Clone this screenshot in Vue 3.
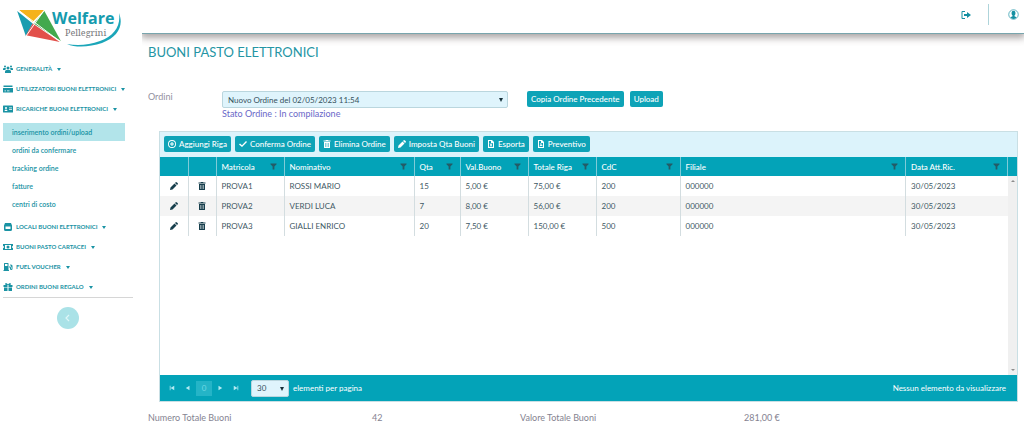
<script setup>
import { ref } from 'vue'

const icons = {
  users: { box: '0 0 20 16', d: 'M4 1a2 2 0 1 1 0 4 2 2 0 0 1 0-4zM16 1a2 2 0 1 1 0 4 2 2 0 0 1 0-4zM10 3a3 3 0 1 1 0 6 3 3 0 0 1 0-6zM0 10V8q0-2 2-2h3l1 2-2 2zM20 10V8q0-2-2-2h-3l-1 2 2 2zM4 16v-3q0-3 3-3h6q3 0 3 3v3z' },
  card: { box: '0 0 20 16', d: 'M1 1h18v3H1zM0 6h20v9H0zM3 11v1.500h3V11zM8 11v1.500h5V11z' },
  idcard: { box: '0 0 20 16', d: 'M1 1h18q1 0 1 1v12q0 1-1 1H1q-1 0-1-1V2q0-1 1-1zM6 4a2 2 0 1 0 0 4 2 2 0 0 0 0-4zM3 12h6q0-3-3-3t-3 3zM12 5v1.500h6V5zM12 8v1.500h6V8z' },
  store: { box: '0 0 20 16', d: 'M4 0h12l2 5v8q0 3-3 3H5q-3 0-3-3V5zM5 7v4q0 1 1 1h8q1 0 1-1V7z' },
  ticket: { box: '0 0 20 16', d: 'M0 2h20v4a2 2 0 0 0 0 4v4H0v-4a2 2 0 0 0 0-4zM4 4v8h12V4zM10 5a3 3 0 1 1 0 6 3 3 0 0 1 0-6z' },
  fuel: { box: '0 0 20 16', d: 'M2 1q0-1 1-1h7q1 0 1 1v13h1v2H1v-2h1zM4 2v4h5V2zM12 7h2q2 0 2 3v2h1V8l-2-2V2l4 3v7q0 2-2.500 2T14 12v-3h-2z' },
  gift: { box: '0 0 20 16', d: 'M1 4h4Q3 0 6 0q2 0 4 3 2-3 4-3 3 0 1 4h4v4h-8V4H9v4H1zM2 9h7v7H2zM11 9h7v7h-7z' },
  plus: { box: '0 0 16 16', d: 'M8 0a8 8 0 1 1 0 16A8 8 0 0 1 8 0zM8 1.800a6.200 6.200 0 1 0 0 12.400A6.200 6.200 0 0 0 8 1.800zM7 4h2v3h3v2H9v3H7V9H4V7h3z' },
  check: { box: '0 0 16 16', d: 'M0 9l2-2 4 3.500L14 2l2 2L6 14z' },
  trash: { box: '0 0 16 16', d: 'M6 0h4l1 1h4v2H1V1h4zM2 4h12v11q0 1-1 1H3q-1 0-1-1zM4.500 6v8h1V6zM7.500 6v8h1V6zM10.500 6v8h1V6z' },
  pencil: { box: '0 0 16 16', d: 'M0 16l1-5 8-8 4 4-8 8zM10 2l2-2q1 0 2 1l1 1q1 1 1 2l-2 2z' },
  sheet: { box: '0 0 16 16', d: 'M2 0h8l4 4v12H2zM4 2v12h8V6H8V2zM5 7h2l1 1.500L9 7h2l-2 3 2 3H9l-1-1.500L7 13H5l2-3z' },
  pdf: { box: '0 0 16 16', d: 'M2 0h8l4 4v12H2zM4 2v12h8V6H8V2zM7 6h1.500v2.500L11 11v1.500L8 11.500 5.500 13 5 12l2-3z' },
  funnel: { box: '0 0 16 16', d: 'M1 1h14v2l-5 5v7H6V8L1 3z' },
  exit: { box: '0 0 20 16', d: 'M8 0v2H3v12h5v2H3q-2 0-2-2V2q0-2 2-2zM6 6h6V2l8 6-8 6v-4H6z' },
}

const before = [
  { label: 'GENERALITÀ', icon: 'users' },
  { label: 'UTILIZZATORI BUONI ELETTRONICI', icon: 'card' },
  { label: 'RICARICHE BUONI ELETTRONICI', icon: 'idcard' },
]
const submenu = ['inserimento ordini/upload', 'ordini da confermare', 'tracking ordine', 'fatture', 'centri di costo']
const after = [
  { label: 'LOCALI BUONI ELETTRONICI', icon: 'store' },
  { label: 'BUONI PASTO CARTACEI', icon: 'ticket' },
  { label: 'FUEL VOUCHER', icon: 'fuel' },
  { label: 'ORDINI BUONI REGALO', icon: 'gift' },
]
const tools = [
  { label: 'Aggiungi Riga', icon: 'plus' },
  { label: 'Conferma Ordine', icon: 'check' },
  { label: 'Elimina Ordine', icon: 'trash' },
  { label: 'Imposta Qta Buoni', icon: 'pencil' },
  { label: 'Esporta', icon: 'sheet' },
  { label: 'Preventivo', icon: 'pdf' },
]
const columns = ['Matricola', 'Nominativo', 'Qta', 'Val.Buono', 'Totale Riga', 'CdC', 'Filiale', 'Data Att.Ric.']
const rows = [
  ['PROVA1', 'ROSSI MARIO', '15', '5,00 €', '75,00 €', '200', '000000', '30/05/2023'],
  ['PROVA2', 'VERDI LUCA', '7', '8,00 €', '56,00 €', '200', '000000', '30/05/2023'],
  ['PROVA3', 'GIALLI ENRICO', '20', '7,50 €', '150,00 €', '500', '000000', '30/05/2023'],
]
const order = ref('Nuovo Ordine del 02/05/2023 11:54')
const pageSize = ref('30')
</script>

<template>
  <div class="page">
    <aside class="sidebar">
      <a href="#" class="logo" aria-label="Welfare Pellegrini">
        <svg class="kite" viewBox="0 0 46 36" aria-hidden="true">
          <path d="M0 1L16 14 9 27z" fill="#1a9db0" />
          <path d="M2 0L28 0 16 12z" fill="#f5b21b" />
          <path d="M28 1L45 32 17 14z" fill="#43a94d" />
          <path d="M16 14L44 33 9 26z" fill="#e2504b" />
          <path d="M1 0L45 33M28 0L9 27" stroke="#fff" stroke-width="1" />
        </svg>
        <span class="brand"><b>Welfare</b><span>Pellegrini</span></span>
        <svg class="swoosh" viewBox="0 0 56 36" aria-hidden="true">
          <path d="M55 0C60 13 54 24 38 30 26 34 12 35 3 31 14 33 25 32 36 28 50 23 57 13 55 0z" fill="#1ba6b9" />
        </svg>
      </a>
      <nav>
        <button v-for="m in before" :key="m.label" class="menu">
          <svg class="menu-icon" :viewBox="icons[m.icon].box"><path :d="icons[m.icon].d" fill-rule="evenodd" /></svg>
          {{ m.label }}<i class="caret"></i>
        </button>
        <div class="submenu">
          <a v-for="(s, i) in submenu" :key="s" href="#" :class="{ active: i === 0 }">{{ s }}</a>
        </div>
        <button v-for="m in after" :key="m.label" class="menu">
          <svg class="menu-icon" :viewBox="icons[m.icon].box"><path :d="icons[m.icon].d" fill-rule="evenodd" /></svg>
          {{ m.label }}<i class="caret"></i>
        </button>
      </nav>
      <hr />
      <button class="collapse" aria-label="Comprimi menu">
        <svg viewBox="0 0 8 8"><path d="M5 1L2 4l3 3" fill="none" stroke="#dff6f8" stroke-width="1.200" /></svg>
      </button>
    </aside>

    <div class="main">
      <header class="topbar">
        <button class="plain" aria-label="Esci">
          <svg class="exit" :viewBox="icons.exit.box"><path :d="icons.exit.d" /></svg>
        </button>
        <span class="divider"></span>
        <button class="plain" aria-label="Profilo">
          <svg class="profile" viewBox="0 0 22 22">
            <circle cx="11" cy="11" r="9.500" fill="#fff" stroke="#2a9aab" stroke-width="1.500" />
            <path d="M11 3.500q4 0 4 4.500 0 3-2 5v1.500l4 2Q15 20 11 20t-6-3.500l4-2V13Q7 11 7 8q0-4.500 4-4.500z" fill="#1590a2" />
          </svg>
        </button>
      </header>

      <main class="content">
        <h1>BUONI PASTO ELETTRONICI</h1>

        <div class="order">
          <label for="order">Ordini</label>
          <div class="order-field">
            <div class="select">
              <select id="order" v-model="order"><option>Nuovo Ordine del 02/05/2023 11:54</option></select>
              <i class="arrow"></i>
            </div>
            <p>Stato Ordine : In compilazione</p>
          </div>
          <div class="order-actions">
            <button class="btn">Copia Ordine Precedente</button>
            <button class="btn">Upload</button>
          </div>
        </div>

        <section class="grid">
          <div class="toolbar">
            <button v-for="t in tools" :key="t.label" class="btn">
              <svg :viewBox="icons[t.icon].box"><path :d="icons[t.icon].d" fill-rule="evenodd" /></svg>{{ t.label }}
            </button>
          </div>
          <div class="body">
            <div class="table-wrap">
              <table>
                <colgroup>
                  <col class="w-icon" /><col class="w-icon" /><col class="w-mat" /><col class="w-name" /><col class="w-qty" />
                  <col class="w-val" /><col class="w-val" /><col class="w-cdc" /><col /><col class="w-date" />
                </colgroup>
                <thead>
                  <tr>
                    <th></th><th></th>
                    <th v-for="c in columns" :key="c">
                      <div class="th">{{ c }}<svg :viewBox="icons.funnel.box"><path :d="icons.funnel.d" /></svg></div>
                    </th>
                  </tr>
                </thead>
                <tbody>
                  <tr v-for="r in rows" :key="r[0]">
                    <td class="act"><button class="plain" aria-label="Modifica"><svg :viewBox="icons.pencil.box"><path :d="icons.pencil.d" /></svg></button></td>
                    <td class="act"><button class="plain" aria-label="Elimina"><svg :viewBox="icons.trash.box"><path :d="icons.trash.d" fill-rule="evenodd" /></svg></button></td>
                    <td v-for="(c, i) in r" :key="i">{{ c }}</td>
                  </tr>
                </tbody>
              </table>
            </div>
            <div class="scroll">
              <div class="scroll-head"></div>
              <div class="track"><i class="up"></i><i class="down"></i></div>
            </div>
          </div>
          <footer class="pager">
            <button aria-label="Prima pagina"><svg viewBox="0 0 8 8"><path d="M1 1h1v6H1zM7 1v6L2 4z" /></svg></button>
            <button aria-label="Pagina precedente"><svg viewBox="0 0 8 8"><path d="M6 1v6L1 4z" /></svg></button>
            <button class="current">0</button>
            <button aria-label="Pagina successiva"><svg viewBox="0 0 8 8"><path d="M2 1v6l5-3z" /></svg></button>
            <button aria-label="Ultima pagina"><svg viewBox="0 0 8 8"><path d="M6 1h1v6H6zM1 1v6l5-3z" /></svg></button>
            <div class="select size">
              <select id="size" v-model="pageSize"><option>30</option></select>
              <i class="arrow"></i>
            </div>
            <label for="size">elementi per pagina</label>
            <span class="info">Nessun elemento da visualizzare</span>
          </footer>
        </section>

        <div class="totals">
          <span>Numero Totale Buoni</span><span>42</span>
          <span>Valore Totale Buoni</span><span>281,00 €</span>
        </div>
      </main>
    </div>
  </div>
</template>

<style>
body { background: #fff; }
</style>

<style scoped>
* { box-sizing: border-box; }
.page {
  display: flex;
  min-height: 100vh;
  font-family: Lato, "Open Sans", sans-serif;
  font-size: 8px;
  line-height: 12px;
  color: #3f5965;
}
button, select { font: inherit; }
button { border: 0; padding: 0; background: none; cursor: pointer; }
a { text-decoration: none; }
svg { display: block; flex: none; fill: currentColor; }

.sidebar { flex: none; width: 142px; padding: 0 9px 0 3px; color: #1a93a4; }
.logo { position: relative; display: flex; height: 59px; padding: 10px 0 0 14px; }
.kite { width: 45px; height: 35px; }
.brand { position: absolute; left: 49px; top: 10px; color: #159bae; font-family: "Open Sans", sans-serif; }
.brand b { display: block; font-size: 16px; line-height: 16px; }
.brand span { display: block; padding-left: 13px; font-family: "Noto Serif", "Liberation Serif", serif; font-size: 9px; line-height: 13px; color: #77777b; }
.swoosh { position: absolute; left: 60px; top: 13px; width: 58px; height: 36px; }

.menu { display: flex; align-items: center; width: 100%; height: 20px; font-size: 6px; font-weight: 700; color: #1a93a4; white-space: nowrap; }
.menu-icon { width: 10px; height: 8px; margin-right: 3px; }
.caret { margin-left: 5px; border: 2px solid transparent; border-top: 3px solid #1a93a4; border-bottom: 0; }
.submenu { display: flex; flex-direction: column; margin: 4px 8px 4px 0; }
.submenu a { height: 18px; padding-left: 9px; font-size: 7px; font-weight: 600; line-height: 18px; color: #1a93a4; }
.submenu .active { background: #b2e4ea; }
hr { margin: 0; border: 0; border-top: 1px solid #d6d6d6; }
.collapse { display: flex; align-items: center; justify-content: center; width: 22px; height: 22px; margin: 9px auto 0; border-radius: 50%; background: #aae2e7; }
.collapse svg { width: 8px; height: 8px; }

.main { flex: 1; min-width: 0; display: flex; flex-direction: column; }
.topbar { display: flex; align-items: center; justify-content: flex-end; height: 34px; padding: 0 5px 4px 0; border-bottom: 1px solid #78a5ad; box-shadow: 0 3px 7px 1px rgba(70, 60, 60, 0.45); color: #1590a2; clip-path: inset(0 0 -14px 0); }
.plain { color: inherit; }
.exit { width: 10px; height: 8px; }
.divider { width: 1px; height: 21px; margin: 0 19px 0 17px; background: #aed4da; }
.profile { width: 11px; height: 11px; }

.content { flex: 1; display: flex; flex-direction: column; padding: 8px 6px 0 6px; }
h1 { margin: 0; font-size: 13px; line-height: 20px; font-weight: 400; color: #2595a4; }
.order { display: flex; align-items: flex-start; margin-top: 29px; min-height: 40px; }
.order > label { width: 74px; font-size: 9px; color: #9390a0; }
.order-field { flex: 0 0 286px; }
.order-field p { margin: 0; font-size: 9px; line-height: 12px; color: #6a68c8; }
.select { position: relative; }
.select select { appearance: none; display: block; width: 100%; height: 17px; padding: 0 5px; border: 1px solid #bad6de; border-radius: 2px; background: #dff4fc; color: #35515d; }
.arrow { position: absolute; right: 5px; top: 7px; border: 2px solid transparent; border-top: 4px solid #17303a; border-bottom: 0; pointer-events: none; }
.order-actions { display: flex; gap: 6px; margin-left: 19px; }
.btn { display: flex; align-items: center; gap: 3px; height: 16px; padding: 0 4px; border-radius: 2px; background: #0ea3b7; color: #fff; font-weight: 500; white-space: nowrap; }
.btn svg { width: 8px; height: 8px; }

.grid { flex: 1; display: flex; flex-direction: column; margin-left: 11px; border: 1px solid #c9dfe4; }
.toolbar { display: flex; gap: 4px; padding: 4px 4px 5px; background: #dcf3fb; }
.body { flex: 1; display: flex; }
.table-wrap { flex: 1; min-width: 0; }
table { width: 100%; table-layout: fixed; border-collapse: collapse; }
.w-icon { width: 28px; }
.w-mat { width: 68px; }
.w-name { width: 130px; }
.w-qty { width: 46px; }
.w-val { width: 68px; }
.w-cdc { width: 84px; }
.w-date { width: 102px; }
th { height: 19px; padding: 0 7px 0 5px; background: #03a3b8; color: #fff; font-weight: 500; text-align: left; border-right: 1px solid #7fcbd8; }
.th { display: flex; align-items: center; justify-content: space-between; white-space: nowrap; }
.th svg { width: 7px; height: 7px; color: #245b66; }
td { height: 20px; padding: 0 5px; border-right: 1px solid #d3dde0; white-space: nowrap; }
td:last-child { border-right: 0; }
tbody tr:nth-child(even) { background: #f4f4f4; }
.act .plain { display: block; margin: 0 auto; color: #173f4d; }
.act svg { width: 8px; height: 8px; }
.scroll { flex: none; width: 9px; display: flex; flex-direction: column; }
.scroll-head { height: 19px; background: #03a3b8; }
.track { flex: 1; display: flex; flex-direction: column; justify-content: space-between; align-items: center; padding: 4px 0; background: #f0f0f0; }
.up { border: 2px solid transparent; border-top: 0; border-bottom-color: #8c8c8c; }
.down { border: 2px solid transparent; border-bottom: 0; border-top-color: #8c8c8c; }

.pager { display: flex; align-items: center; height: 26px; padding: 0 11px 0 4px; background: #03a3b8; color: #fff; }
.pager button { display: flex; align-items: center; justify-content: center; width: 16px; height: 15px; color: #b3eaf2; }
.pager svg { width: 6px; height: 6px; }
.pager .current { background: #24b4c7; color: #70d8e4; }
.size { width: 38px; margin: 0 4px 0 7px; }
.info { margin-left: auto; }
.totals { display: grid; grid-template-columns: 224fr 148fr 224fr 274fr; height: 26px; padding-top: 10px; font-size: 9px; color: #858391; }
</style>
